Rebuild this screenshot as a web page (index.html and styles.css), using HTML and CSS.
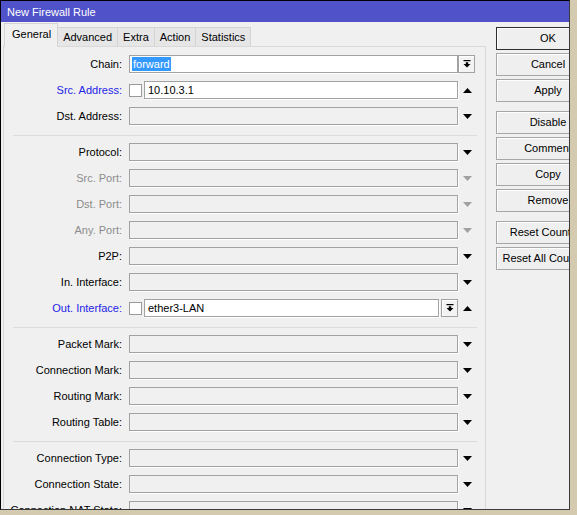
FILE: index.html
```html
<!DOCTYPE html>
<html>
<head>
<meta charset="utf-8">
<link rel="stylesheet" href="styles.css">
</head>
<body>
<div class="window">
  <div class="titlebar">New Firewall Rule</div>
  <div class="main">
    <div class="left">
      <div class="tabs">
        <div class="tab active">General</div>
        <div class="tab">Advanced</div>
        <div class="tab">Extra</div>
        <div class="tab">Action</div>
        <div class="tab">Statistics</div>
      </div>
      <div class="panel">
        <div class="row">
          <div class="label">Chain:</div>
          <div class="field white"><span class="sel">forward</span></div>
          <div class="arrowcol"><div class="ddbtn"><svg width="8" height="8" viewBox="0 0 8 8"><rect x="0.5" y="0" width="7" height="1.2" fill="#000"/><polygon points="2.8,2.2 5.2,2.2 5.2,4 7.5,4 4,7.5 0.5,4 2.8,4" fill="#000"/></svg></div></div>
        </div>
        <div class="row">
          <div class="label blue">Src. Address:</div>
          <div class="check"></div>
          <div class="field white">10.10.3.1</div>
          <div class="arrowcol"><svg class="tri" width="9" height="5" viewBox="0 0 9 5"><polygon points="0,5 9,5 4.5,0" fill="#000"/></svg></div>
        </div>
        <div class="row">
          <div class="label">Dst. Address:</div>
          <div class="field"></div>
          <div class="arrowcol"><svg class="tri" width="9" height="5" viewBox="0 0 9 5"><polygon points="0,0 9,0 4.5,5" fill="#000"/></svg></div>
        </div>
        <div class="sep"></div>
        <div class="row">
          <div class="label">Protocol:</div>
          <div class="field"></div>
          <div class="arrowcol"><svg class="tri" width="9" height="5" viewBox="0 0 9 5"><polygon points="0,0 9,0 4.5,5" fill="#000"/></svg></div>
        </div>
        <div class="row">
          <div class="label grey">Src. Port:</div>
          <div class="field"></div>
          <div class="arrowcol"><svg class="tri" width="9" height="5" viewBox="0 0 9 5"><polygon points="0,0 9,0 4.5,5" fill="#a0a0a0"/></svg></div>
        </div>
        <div class="row">
          <div class="label grey">Dst. Port:</div>
          <div class="field"></div>
          <div class="arrowcol"><svg class="tri" width="9" height="5" viewBox="0 0 9 5"><polygon points="0,0 9,0 4.5,5" fill="#a0a0a0"/></svg></div>
        </div>
        <div class="row">
          <div class="label grey">Any. Port:</div>
          <div class="field"></div>
          <div class="arrowcol"><svg class="tri" width="9" height="5" viewBox="0 0 9 5"><polygon points="0,0 9,0 4.5,5" fill="#a0a0a0"/></svg></div>
        </div>
        <div class="row">
          <div class="label">P2P:</div>
          <div class="field"></div>
          <div class="arrowcol"><svg class="tri" width="9" height="5" viewBox="0 0 9 5"><polygon points="0,0 9,0 4.5,5" fill="#000"/></svg></div>
        </div>
        <div class="row">
          <div class="label">In. Interface:</div>
          <div class="field"></div>
          <div class="arrowcol"><svg class="tri" width="9" height="5" viewBox="0 0 9 5"><polygon points="0,0 9,0 4.5,5" fill="#000"/></svg></div>
        </div>
        <div class="row">
          <div class="label blue">Out. Interface:</div>
          <div class="check"></div>
          <div class="field white">ether3-LAN</div>
          <div class="ddbtn inline"><svg width="8" height="8" viewBox="0 0 8 8"><rect x="0.5" y="0" width="7" height="1.2" fill="#000"/><polygon points="2.8,2.2 5.2,2.2 5.2,4 7.5,4 4,7.5 0.5,4 2.8,4" fill="#000"/></svg></div>
          <div class="arrowcol"><svg class="tri" width="9" height="5" viewBox="0 0 9 5"><polygon points="0,5 9,5 4.5,0" fill="#000"/></svg></div>
        </div>
        <div class="sep"></div>
        <div class="row">
          <div class="label">Packet Mark:</div>
          <div class="field"></div>
          <div class="arrowcol"><svg class="tri" width="9" height="5" viewBox="0 0 9 5"><polygon points="0,0 9,0 4.5,5" fill="#000"/></svg></div>
        </div>
        <div class="row">
          <div class="label">Connection Mark:</div>
          <div class="field"></div>
          <div class="arrowcol"><svg class="tri" width="9" height="5" viewBox="0 0 9 5"><polygon points="0,0 9,0 4.5,5" fill="#000"/></svg></div>
        </div>
        <div class="row">
          <div class="label">Routing Mark:</div>
          <div class="field"></div>
          <div class="arrowcol"><svg class="tri" width="9" height="5" viewBox="0 0 9 5"><polygon points="0,0 9,0 4.5,5" fill="#000"/></svg></div>
        </div>
        <div class="row">
          <div class="label">Routing Table:</div>
          <div class="field"></div>
          <div class="arrowcol"><svg class="tri" width="9" height="5" viewBox="0 0 9 5"><polygon points="0,0 9,0 4.5,5" fill="#000"/></svg></div>
        </div>
        <div class="sep"></div>
        <div class="row">
          <div class="label">Connection Type:</div>
          <div class="field"></div>
          <div class="arrowcol"><svg class="tri" width="9" height="5" viewBox="0 0 9 5"><polygon points="0,0 9,0 4.5,5" fill="#000"/></svg></div>
        </div>
        <div class="row">
          <div class="label">Connection State:</div>
          <div class="field"></div>
          <div class="arrowcol"><svg class="tri" width="9" height="5" viewBox="0 0 9 5"><polygon points="0,0 9,0 4.5,5" fill="#000"/></svg></div>
        </div>
        <div class="row">
          <div class="label">Connection NAT State:</div>
          <div class="field"></div>
          <div class="arrowcol"><svg class="tri" width="9" height="5" viewBox="0 0 9 5"><polygon points="0,0 9,0 4.5,5" fill="#000"/></svg></div>
        </div>
      </div>
    </div>
    <div class="buttons">
      <div class="group">
        <div class="btn default">OK</div>
        <div class="btn">Cancel</div>
        <div class="btn">Apply</div>
      </div>
      <div class="group">
        <div class="btn">Disable</div>
        <div class="btn">Comment</div>
        <div class="btn">Copy</div>
        <div class="btn">Remove</div>
      </div>
      <div class="group">
        <div class="btn">Reset Counters</div>
        <div class="btn">Reset All Counters</div>
      </div>
    </div>
  </div>
</div>
</body>
</html>
```
FILE: styles.css
```css
html, body {
  margin: 0;
  padding: 0;
}
body {
  width: 577px;
  height: 515px;
  overflow: hidden;
  background: #d3cab0;
  font-family: "Liberation Sans", Arial, sans-serif;
  font-size: 11px;
  color: #000;
}
.window {
  width: 570px;
  height: 510px;
  box-sizing: border-box;
  border-left: 1px solid #000;
  border-top: 1px solid #000;
  border-right: 1px solid #3a3a3a;
  border-bottom: 1px solid #3a3a3a;
  background: #f0f0f0;
  overflow: hidden;
  display: flex;
  flex-direction: column;
}
.titlebar {
  height: 21px;
  line-height: 22px;
  background: #4f52c9;
  color: #fff;
  padding-left: 6px;
  flex: none;
}
.main {
  display: flex;
  flex: 1;
  min-height: 0;
  padding-top: 1px;
}
.left {
  width: 485px;
  flex: none;
  display: flex;
  flex-direction: column;
}
.tabs {
  display: flex;
  align-items: flex-end;
  height: 23px;
  padding-left: 3px;
  position: relative;
  z-index: 1;
}
.tab {
  height: 19px;
  line-height: 19px;
  box-sizing: border-box;
  padding: 0 5px;
  background: #e6e6e6;
  border: 1px solid #d4d4d4;
  border-bottom: none;
  margin-right: -1px;
}
.tab.active {
  line-height: 20px;
  background: #f0f0f0;
  padding: 0 6px 0 7px;
  border-color: #d4d4d4;
  margin-bottom: -1px;
  height: 24px;
}
.panel {
  margin-left: 2px;
  flex: 1;
  border: 1px solid #d9d9d9;
  border-bottom: none;
  padding: 8px 8px 0 0;
  overflow: hidden;
}
.row {
  display: flex;
  align-items: center;
  height: 18px;
  margin-bottom: 8px;
}
.label {
  width: 118px;
  flex: none;
  text-align: right;
  margin-right: 7px;
  white-space: nowrap;
}
.label.blue { color: #2323e6; }
.label.grey { color: #8c8c8c; }
.field {
  flex: 1;
  height: 18px;
  box-sizing: border-box;
  border: 1px solid #a2a2a2;
  box-shadow: 1px 1px 0 #fff;
  padding-left: 3px;
  line-height: 16px;
  white-space: nowrap;
  overflow: hidden;
}
.field.white {
  background: #fff;
}
.sel {
  background: #3399ff;
  color: #fff;
  margin-left: -1px;
  padding: 1px 1px;
}
.check {
  width: 13px;
  height: 13px;
  box-sizing: border-box;
  border: 1px solid #9a9a9a;
  background: #fff;
  margin-right: 2px;
  flex: none;
}
.arrowcol {
  width: 19px;
  flex: none;
  height: 18px;
  display: flex;
  align-items: center;
  justify-content: center;
}
.tri {
  display: block;
}
.ddbtn {
  width: 17px;
  height: 18px;
  box-sizing: border-box;
  border: 1px solid #a2a2a2;
  background: #f3f3f3;
  box-shadow: inset 1px 1px 0 #fff;
  display: flex;
  align-items: center;
  justify-content: center;
  margin-right: 2px;
}
.ddbtn.inline {
  margin-left: 2px;
  margin-right: 0;
  flex: none;
}
.sep {
  height: 1px;
  background: #dcdcdc;
  margin: 10px 0 7px 9px;
}
.buttons {
  margin-left: 10px;
  padding-top: 4px;
  display: flex;
  flex-direction: column;
  gap: 9px;
}
.group {
  display: flex;
  flex-direction: column;
  gap: 3px;
}
.btn {
  width: 104px;
  height: 23px;
  box-sizing: border-box;
  border: 1px solid #a6a6a6;
  background: #efefef;
  box-shadow: inset 1px 1px 0 #fff;
  text-align: center;
  line-height: 21px;
  white-space: nowrap;
}
.btn.default {
  border-color: #2e2e2e;
}
```
